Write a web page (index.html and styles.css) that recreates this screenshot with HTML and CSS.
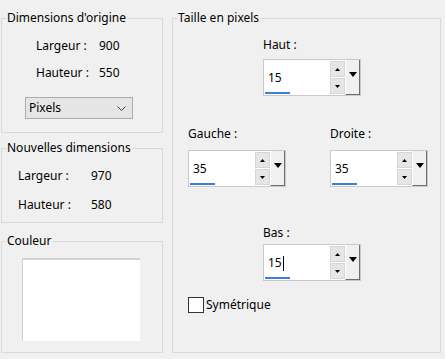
FILE: index.html
```html
<!DOCTYPE html>
<html lang="fr">
<head>
    <meta charset="UTF-8"/>
    <title>Taille de la zone de travail</title>
    <link rel="stylesheet" href="styles.css">
</head>
<body>
<div class="dialog">
    <div class="col-left">
        <fieldset class="group group-orig">
            <legend>Dimensions d'origine</legend>
            <div class="dims dims-orig">
                <span>Largeur :</span><span>900</span>
                <span>Hauteur :</span><span>550</span>
            </div>
            <div class="select">
                <span>Pixels</span>
                <svg width="9" height="5" viewBox="0 0 9 5"><path d="M0.5 0.5 L4.5 4.5 L8.5 0.5" fill="none" stroke="#444" stroke-width="1"/></svg>
            </div>
        </fieldset>
        <fieldset class="group group-new">
            <legend>Nouvelles dimensions</legend>
            <div class="dims dims-new">
                <span>Largeur :</span><span>970</span>
                <span>Hauteur :</span><span>580</span>
            </div>
        </fieldset>
        <fieldset class="group group-color">
            <legend>Couleur</legend>
            <div class="swatch"></div>
        </fieldset>
    </div>

    <fieldset class="group group-size">
        <legend>Taille en pixels</legend>
        <div class="size-body">
            <div class="field field-top">
                <div class="field-label">Haut :</div>
                <div class="spin">
                    <div class="spin-input"><span>15</span><i class="spin-bar"></i></div>
                    <div class="spin-btns">
                        <div class="spin-btn"><svg width="5" height="3" viewBox="0 0 5 3"><path d="M0 3 L2.5 0 L5 3Z" fill="#000"/></svg></div>
                        <div class="spin-btn"><svg width="5" height="3" viewBox="0 0 5 3"><path d="M0 0 L2.5 3 L5 0Z" fill="#000"/></svg></div>
                    </div>
                    <div class="spin-drop"><svg width="8" height="5" viewBox="0 0 8 5"><path d="M0 0 L4 5 L8 0Z" fill="#000"/></svg></div>
                </div>
            </div>
            <div class="field-row">
                <div class="field">
                    <div class="field-label">Gauche :</div>
                    <div class="spin">
                        <div class="spin-input"><span>35</span><i class="spin-bar"></i></div>
                        <div class="spin-btns">
                            <div class="spin-btn"><svg width="5" height="3" viewBox="0 0 5 3"><path d="M0 3 L2.5 0 L5 3Z" fill="#000"/></svg></div>
                            <div class="spin-btn"><svg width="5" height="3" viewBox="0 0 5 3"><path d="M0 0 L2.5 3 L5 0Z" fill="#000"/></svg></div>
                        </div>
                        <div class="spin-drop"><svg width="8" height="5" viewBox="0 0 8 5"><path d="M0 0 L4 5 L8 0Z" fill="#000"/></svg></div>
                    </div>
                </div>
                <div class="field field-right">
                    <div class="field-label">Droite :</div>
                    <div class="spin">
                        <div class="spin-input"><span>35</span><i class="spin-bar"></i></div>
                        <div class="spin-btns">
                            <div class="spin-btn"><svg width="5" height="3" viewBox="0 0 5 3"><path d="M0 3 L2.5 0 L5 3Z" fill="#000"/></svg></div>
                            <div class="spin-btn"><svg width="5" height="3" viewBox="0 0 5 3"><path d="M0 0 L2.5 3 L5 0Z" fill="#000"/></svg></div>
                        </div>
                        <div class="spin-drop"><svg width="8" height="5" viewBox="0 0 8 5"><path d="M0 0 L4 5 L8 0Z" fill="#000"/></svg></div>
                    </div>
                </div>
            </div>
            <div class="field field-bottom">
                <div class="field-label">Bas :</div>
                <div class="spin">
                    <div class="spin-input"><span class="caret">15</span><i class="spin-bar"></i></div>
                    <div class="spin-btns">
                        <div class="spin-btn"><svg width="5" height="3" viewBox="0 0 5 3"><path d="M0 3 L2.5 0 L5 3Z" fill="#000"/></svg></div>
                        <div class="spin-btn"><svg width="5" height="3" viewBox="0 0 5 3"><path d="M0 0 L2.5 3 L5 0Z" fill="#000"/></svg></div>
                    </div>
                    <div class="spin-drop"><svg width="8" height="5" viewBox="0 0 8 5"><path d="M0 0 L4 5 L8 0Z" fill="#000"/></svg></div>
                </div>
            </div>
            <label class="check"><span class="check-box"></span>Symétrique</label>
        </div>
    </fieldset>
</div>
</body>
</html>
```

FILE: styles.css
```css
/* fond de la boite de dialogue */
body {
    margin: 0;
    background-color: #f0f0f0;
    font-family: "Noto Sans", "Liberation Sans", sans-serif;
    font-size: 12px;
    line-height: 16px;
    color: #000;
}

.dialog {
    display: flex;
    height: 353px;
    padding: 10px 0 0 1px;
    box-sizing: border-box;
}

/* cadres de groupe */
.group {
    margin: 0;
    padding: 0;
    min-width: 0;
    border: 1px solid #d9d9d9;
    box-sizing: border-box;
}

.group legend {
    margin-left: 4px;
    padding: 0 1px;
    line-height: 16px;
}

.col-left {
    display: flex;
    flex-direction: column;
    width: 162px;
}

.group-orig {
    padding: 12px 0 13px 0;
}

.group-new {
    margin-top: 7px;
    padding: 12px 0 9px 0;
}

.group-color {
    flex: 1;
    margin-top: 10px;
    padding-top: 9px;
}

/* lignes largeur / hauteur */
.dims {
    display: grid;
    row-gap: 11px;
}

.dims-orig {
    grid-template-columns: 63px auto;
    padding-left: 34px;
}

.dims-new {
    grid-template-columns: 73px auto;
    row-gap: 13px;
    padding-left: 16px;
}

.select {
    display: flex;
    justify-content: space-between;
    align-items: center;
    width: 108px;
    height: 22px;
    margin: 16px 0 0 23px;
    padding: 0 6px 0 3px;
    border: 1px solid #adadad;
    background-color: #e5e5e5;
    box-sizing: border-box;
}

.swatch {
    width: 118px;
    height: 83px;
    margin-left: 20px;
    background-color: #fff;
    border-top: 2px solid #d2d2d2;
    border-left: 1px solid #d2d2d2;
    box-sizing: border-box;
}

/* cadre de droite */
.group-size {
    width: 269px;
    margin-left: 9px;
}

.size-body {
    padding: 11px 0 0 15px;
}

.field-top,
.field-bottom {
    margin-left: 75px;
}

.field-bottom {
    margin-top: 38px;
}

.field-bottom .field-label {
    margin-bottom: 3px;
}

.field-label {
    margin-bottom: 6px;
}

.field-row {
    display: flex;
    margin-top: 30px;
}

.field-row .field-label {
    margin-bottom: 8px;
}

.field-right {
    margin-left: 44px;
}

/* champ numerique */
.spin {
    display: flex;
    width: 98px;
    height: 37px;
    border: 1px solid #cacaca;
    background-color: #fff;
    box-sizing: border-box;
}

.spin-input {
    flex: 1;
    display: flex;
    flex-direction: column;
    justify-content: flex-end;
    padding-left: 1px;
}

.spin-input span {
    padding: 0 0 6px 3px;
}

.caret {
    display: flex;
    align-items: center;
}

.caret::after {
    content: "";
    width: 1px;
    height: 15px;
    margin-left: 1px;
    background-color: #000;
}

.spin-bar {
    display: block;
    width: 25px;
    height: 2px;
    margin-bottom: 1px;
    background-color: #3c7fd8;
}

.spin-btns {
    display: flex;
    flex-direction: column;
    gap: 1px;
    width: 15px;
    padding: 1px 0;
    box-sizing: border-box;
}

.spin-btn {
    flex: 1;
    display: flex;
    align-items: center;
    justify-content: center;
    background-color: #e6e6e6;
    border: 1px solid #d6d6d6;
}

.spin-drop {
    display: flex;
    justify-content: center;
    width: 15px;
    padding-top: 12px;
    background-color: #f0f0f0;
    border-left: 1px solid #fff;
    border-right: 1px solid #6e6e6e;
    border-bottom: 1px solid #6e6e6e;
    box-sizing: border-box;
}

/* case a cocher */
.check {
    display: flex;
    align-items: center;
    margin-top: 16px;
}

.check-box {
    width: 16px;
    height: 16px;
    margin-right: 2px;
    border: 1px solid #333;
    background-color: #fff;
    box-sizing: border-box;
}
```
